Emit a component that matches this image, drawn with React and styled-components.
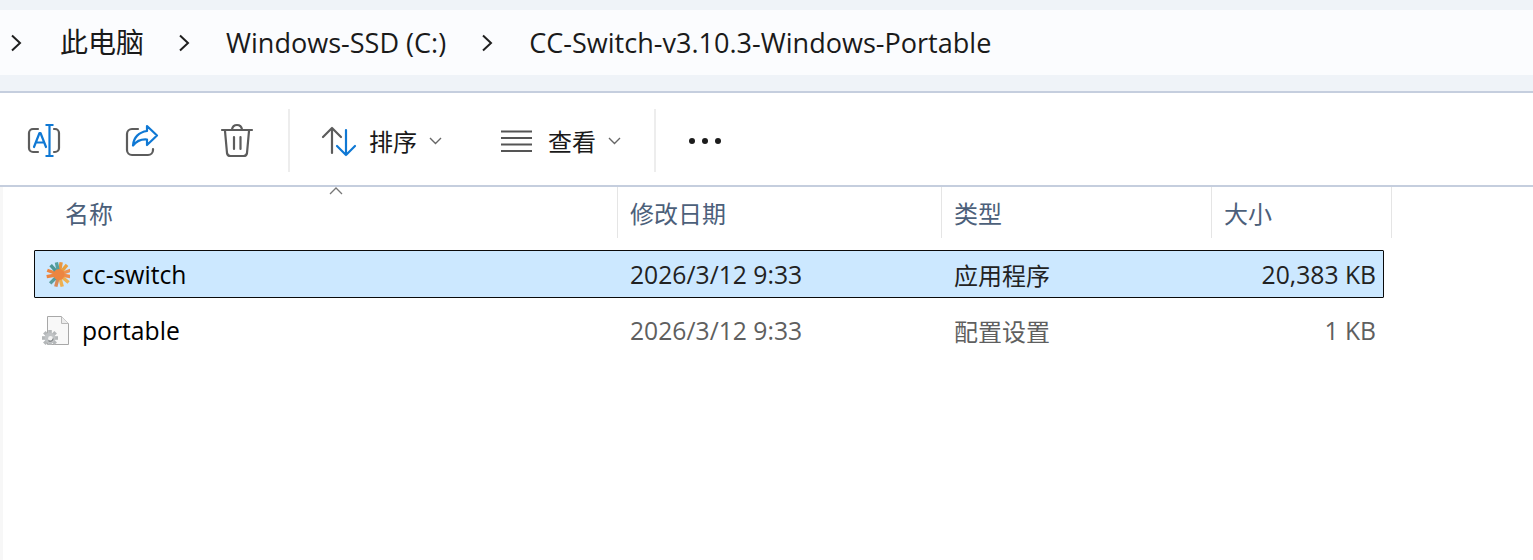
import React from 'react';
import styled, { createGlobalStyle } from 'styled-components';

const FONT = '"Open Sans", "Noto Sans CJK SC", sans-serif';

const GlobalStyle = createGlobalStyle`
  html, body {
    margin: 0;
    padding: 0;
    background: #ffffff;
    font-family: ${FONT};
  }
`;

const Page = styled.div`
  width: 1533px;
  height: 560px;
  overflow: hidden;
  display: flex;
  flex-direction: column;
  background: #ffffff;
`;

const AddressBand = styled.div`
  height: 93px;
  padding: 10px 0 16px;
  box-sizing: border-box;
  background: #eff3f8;
  border-bottom: 2px solid #c5cede;
`;

const AddressBar = styled.nav`
  height: 65px;
  background: #fbfcfe;
  display: flex;
  align-items: center;
  padding-left: 10px;
`;

const Crumb = styled.span`
  font-size: ${(p) => p.$size || 27.05}px;
  line-height: 65px;
  color: #1a1a1a;
  margin-left: ${(p) => p.$gap}px;
  margin-right: ${(p) => p.$after || 0}px;
  white-space: nowrap;
`;

const Chevron = styled.svg`
  width: 13px;
  height: 20px;
  flex: none;
  fill: none;
  stroke: #1f1f1f;
  stroke-width: 2;
`;

const Toolbar = styled.div`
  height: 94px;
  box-sizing: border-box;
  border-bottom: 2px solid #c5cede;
  display: flex;
  align-items: center;
  padding: 3px 0 0 20px;
`;

const IconButton = styled.button`
  width: ${(p) => p.$width}px;
  height: 50px;
  padding: 0;
  border: 0;
  background: none;
  display: flex;
  align-items: center;
  justify-content: center;
  flex: none;
  font-family: inherit;
`;

const ToolIcon = styled.svg`
  width: 36px;
  height: 36px;
  flex: none;
  fill: none;
  stroke-width: 2.2;
  stroke-linecap: round;
  stroke-linejoin: round;
`;

const Separator = styled.div`
  width: 2px;
  height: 63px;
  background: #ededed;
  flex: none;
  margin: 0 ${(p) => p.$right}px 0 ${(p) => p.$left}px;
`;

const MenuButton = styled.div`
  display: flex;
  align-items: center;
  flex: none;
  width: ${(p) => p.$width}px;
`;

const MenuLabel = styled.span`
  font-size: 24px;
  line-height: 34px;
  padding-top: 3px;
  color: #1a1a1a;
  margin: 0 12px 0 ${(p) => p.$left}px;
`;

const Caret = styled.svg`
  width: 13px;
  height: 8px;
  fill: none;
  stroke: #666666;
  stroke-width: 1.4;
`;

const Dots = styled.div`
  display: flex;
  gap: 7px;
  margin-left: 33px;
`;

const Dot = styled.span`
  width: 6px;
  height: 6px;
  border-radius: 50%;
  background: #1c1c1c;
`;

const Content = styled.div`
  flex: 1;
  position: relative;
  border-left: 3px solid #f7f7f7;
`;

const SortMark = styled.svg`
  position: absolute;
  left: 326px;
  top: 0;
  width: 14px;
  height: 8px;
  fill: none;
  stroke: #777777;
  stroke-width: 1.3;
`;

const HeaderRow = styled.div`
  display: grid;
  grid-template-columns: 615px 324px 270px 180px;
  height: 51px;
`;

const HeaderCell = styled.div`
  height: 51px;
  box-sizing: border-box;
  padding-left: ${(p) => p.$pad}px;
  border-right: 1px solid #e5e5e5;
  font-size: 24px;
  line-height: 53px;
  color: #4c607a;
`;

const Rows = styled.div`
  margin: 12px 0 0 31px;
  width: 1350px;
  display: flex;
  flex-direction: column;
  gap: 8px;
`;

const Row = styled.div`
  display: grid;
  grid-template-columns: 583px 324px 257px 1fr;
  align-items: center;
  height: 48px;
  box-sizing: border-box;
  background: ${(p) => (p.$selected ? '#cce8ff' : 'transparent')};
  border: 1px solid ${(p) => (p.$selected ? '#0a0a0a' : 'transparent')};
  border-radius: 1px;
  font-size: 24.7px;
`;

const NameCell = styled.div`
  display: flex;
  align-items: center;
  gap: 12px;
  padding-left: 7px;
  color: #000000;
`;

const FileIcon = styled.svg`
  width: 28px;
  height: 30px;
  flex: none;
`;

const DataCell = styled.div`
  padding-left: ${(p) => p.$pad || 0}px;
  padding-right: ${(p) => p.$right || 0}px;
  text-align: ${(p) => p.$align || 'left'};
  font-size: ${(p) => (p.$cjk ? '24px' : 'inherit')};
  color: ${(p) => (p.$selected ? '#222222' : '#5f5f5f')};
  white-space: nowrap;
`;

const files = [
  { name: 'cc-switch', date: '2026/3/12 9:33', type: '应用程序', size: '20,383 KB', selected: true, Icon: AppIcon },
  { name: 'portable', date: '2026/3/12 9:33', type: '配置设置', size: '1 KB', selected: false, Icon: ConfigIcon },
];

const columns = [
  { label: '名称', pad: 62 },
  { label: '修改日期', pad: 12 },
  { label: '类型', pad: 12 },
  { label: '大小', pad: 12 },
];

function AppIcon() {
  const spokes = [
    [-80, '#e9963f'], [-50, '#e9a13f'], [-20, '#ee9350'], [10, '#ef8d4a'],
    [40, '#eeb04f'], [75, '#eeb04f'], [105, '#d98a58'], [135, '#5a9d9c'],
    [170, '#ec8540'], [200, '#ec8540'], [228, '#4b9695'], [258, '#55a09e'],
  ];
  return (
    <FileIcon viewBox="0 0 28 30">
      {spokes.map(([angle, color]) => (
        <line
          key={angle}
          x1="17"
          y1="15.500"
          x2={17 + 12.5 * Math.cos((angle * Math.PI) / 180)}
          y2={15.5 + 12.5 * Math.sin((angle * Math.PI) / 180)}
          stroke={color}
          strokeWidth="3.4"
        />
      ))}
      <circle cx="17" cy="15.500" r="5.500" fill="#ec8540" />
    </FileIcon>
  );
}

function ConfigIcon() {
  const teeth = [0, 45, 90, 135];
  return (
    <FileIcon viewBox="0 0 28 30">
      <path d="M5.500 1.500H19.500L26.500 8.500V29.500H5.500Z" fill="#f8f8f8" stroke="#a8a8a8" />
      <path d="M19.500 1.500V8.500H26.500" fill="#ececec" stroke="#b8b8b8" />
      {teeth.map((angle) => (
        <rect
          key={angle}
          x="0"
          y="21.200"
          width="16"
          height="3.600"
          fill="#b4b7b9"
          transform={`rotate(${angle} 8 23)`}
        />
      ))}
      <circle cx="8" cy="23" r="5.400" fill="#c0c3c5" />
      <circle cx="8.500" cy="23.500" r="2.400" fill="#f2f2f2" />
      <path d="M6.500 25.500a2.800 2.800 0 0 0 4.600-2" fill="none" stroke="#7c8082" strokeWidth="1.200" />
    </FileIcon>
  );
}

function RenameIcon() {
  return (
    <ToolIcon viewBox="0 0 36 36">
      <path d="M12 6H7a4 4 0 0 0-4 4v15a4 4 0 0 0 4 4h5M28 6h1a4 4 0 0 1 4 4v15a4 4 0 0 1-4 4h-1" stroke="#5c5c5c" />
      <path d="M8 24l5.500-14h1l5.500 14M10 19.500h8" stroke="#0f78d4" />
      <path d="M19.500 2h8M23.500 2v31M19.500 33h8" stroke="#0f78d4" strokeLinecap="butt" />
    </ToolIcon>
  );
}

function ShareIcon() {
  return (
    <ToolIcon viewBox="0 0 36 36">
      <path d="M14 6H8a5 5 0 0 0-5 5v16a5 5 0 0 0 5 5h16a5 5 0 0 0 5-5v-1" stroke="#5c5c5c" />
      <path d="M23 3l10 9.500-10 9.500v-5.500c-5.500-.5-10 1-14 6 .5-8 6-13.500 14-14.500Z" stroke="#0f78d4" />
    </ToolIcon>
  );
}

function TrashIcon() {
  return (
    <ToolIcon viewBox="0 0 36 36">
      <path d="M3 7h30M13 6.500C13.500 3.500 15.500 2 18 2s4.500 1.500 5 4.500M6 8l2 22a3.500 3.500 0 0 0 3.500 3h13a3.500 3.500 0 0 0 3.500-3l2-22M15 14v12M21.500 14v12" stroke="#5c5c5c" />
    </ToolIcon>
  );
}

function SortIcon() {
  return (
    <ToolIcon viewBox="0 0 36 36">
      <path d="M11 30V5M2 14l9-9 9 9" stroke="#5c5c5c" />
      <path d="M25 7v25M16 23l9 9 9-9" stroke="#0f78d4" />
    </ToolIcon>
  );
}

function ViewIcon() {
  return (
    <ToolIcon viewBox="0 0 36 36">
      <path d="M3 8.500h31M3 15h31M3 21.500h31M3 28h31" stroke="#555555" strokeLinecap="butt" />
    </ToolIcon>
  );
}

function DownCaret() {
  return (
    <Caret viewBox="0 0 13 8">
      <path d="M1 1l5.500 5.500L12 1" />
    </Caret>
  );
}

function PathChevron() {
  return (
    <Chevron viewBox="0 0 13 20">
      <path d="M2 2.500l8 7.500-8 7.500" />
    </Chevron>
  );
}

export default function App() {
  return (
    <Page>
      <GlobalStyle />
      <AddressBand>
        <AddressBar>
          <PathChevron />
          <Crumb $gap={37} $after={34} $size={28}>此电脑</Crumb>
          <PathChevron />
          <Crumb $gap={35} $after={35}>Windows-SSD (C:)</Crumb>
          <PathChevron />
          <Crumb $gap={35}>CC-Switch-v3.10.3-Windows-Portable</Crumb>
        </AddressBar>
      </AddressBand>
      <Toolbar>
        <IconButton $width={48}><RenameIcon /></IconButton>
        <IconButton $width={147}><ShareIcon /></IconButton>
        <IconButton $width={43}><TrashIcon /></IconButton>
        <Separator $left={30} $right={31} />
        <MenuButton $width={177}>
          <SortIcon />
          <MenuLabel $left={12}>排序</MenuLabel>
          <DownCaret />
        </MenuButton>
        <MenuButton $width={156}>
          <ViewIcon />
          <MenuLabel $left={14}>查看</MenuLabel>
          <DownCaret />
        </MenuButton>
        <Separator $left={0} $right={0} />
        <Dots>
          <Dot />
          <Dot />
          <Dot />
        </Dots>
      </Toolbar>
      <Content>
        <SortMark viewBox="0 0 14 8">
          <path d="M1 7l6-6 6 6" />
        </SortMark>
        <HeaderRow>
          {columns.map((col) => (
            <HeaderCell key={col.label} $pad={col.pad}>{col.label}</HeaderCell>
          ))}
        </HeaderRow>
        <Rows>
          {files.map((file) => (
            <Row key={file.name} $selected={file.selected}>
              <NameCell>
                <file.Icon />
                {file.name}
              </NameCell>
              <DataCell $pad={12} $selected={file.selected}>{file.date}</DataCell>
              <DataCell $pad={12} $cjk $selected={file.selected}>{file.type}</DataCell>
              <DataCell $align="right" $right={7} $selected={file.selected}>{file.size}</DataCell>
            </Row>
          ))}
        </Rows>
      </Content>
    </Page>
  );
}
